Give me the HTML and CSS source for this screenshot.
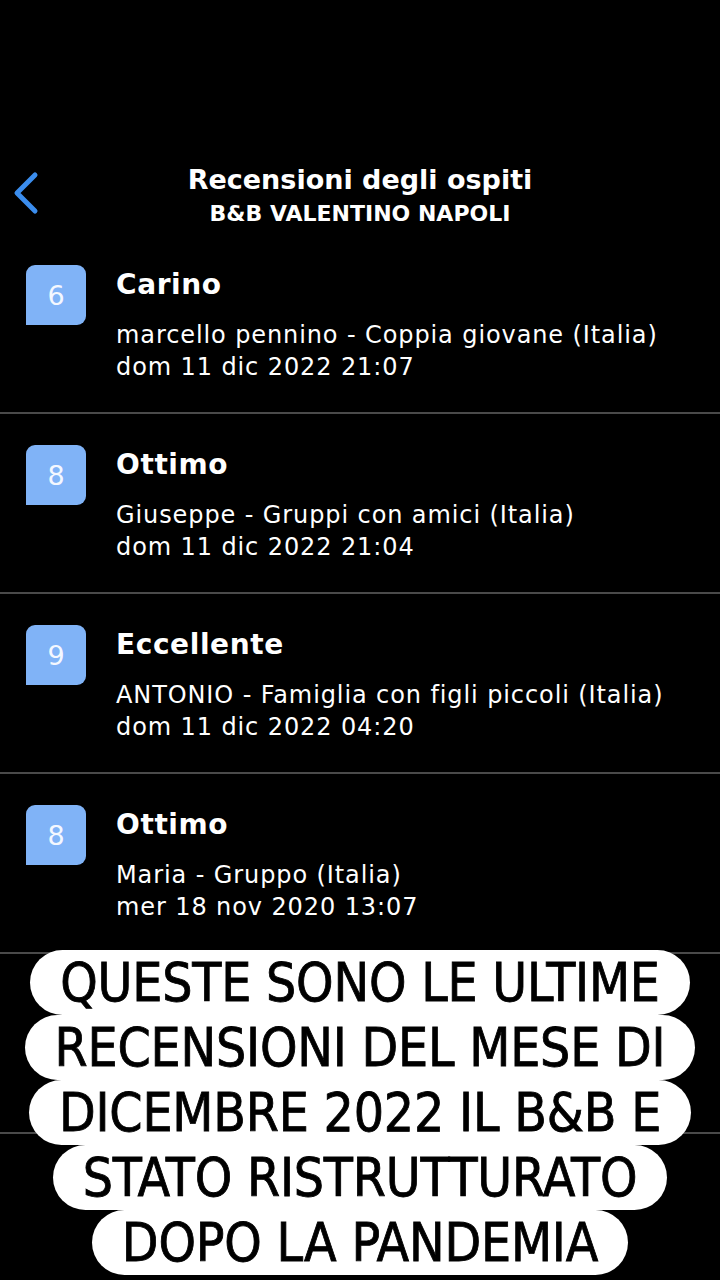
FILE: index.html
```html
<!DOCTYPE html>
<html lang="it">
<head>
    <meta charset="UTF-8">
    <meta name="viewport" content="width=device-width, initial-scale=1.0">
    <title>Recensioni degli ospiti</title>
    <link rel="stylesheet" href="styles.css">
</head>
<body>
    <div class="screen">
        <header class="nav">
            <a class="back" href="#">
                <svg width="30" height="44" viewBox="0 0 30 44">
                    <path d="M24 4 L6 22 L24 40" fill="none" stroke="#3b8ded" stroke-width="5" stroke-linecap="round" stroke-linejoin="round"/>
                </svg>
            </a>
            <div class="nav-title">
                <h1>Recensioni degli ospiti</h1>
                <p>B&amp;B VALENTINO NAPOLI</p>
            </div>
        </header>

        <ul class="reviews">
            <li class="review">
                <div class="score">6</div>
                <div class="review-body">
                    <h2>Carino</h2>
                    <p>marcello pennino - Coppia giovane (Italia)</p>
                    <p>dom 11 dic 2022 21:07</p>
                </div>
            </li>
            <li class="review">
                <div class="score">8</div>
                <div class="review-body">
                    <h2>Ottimo</h2>
                    <p>Giuseppe - Gruppi con amici (Italia)</p>
                    <p>dom 11 dic 2022 21:04</p>
                </div>
            </li>
            <li class="review">
                <div class="score">9</div>
                <div class="review-body">
                    <h2>Eccellente</h2>
                    <p>ANTONIO - Famiglia con figli piccoli (Italia)</p>
                    <p>dom 11 dic 2022 04:20</p>
                </div>
            </li>
            <li class="review">
                <div class="score">8</div>
                <div class="review-body">
                    <h2>Ottimo</h2>
                    <p>Maria - Gruppo (Italia)</p>
                    <p>mer 18 nov 2020 13:07</p>
                </div>
            </li>
            <li class="review"></li>
        </ul>

        <!-- testo della storia sopra la lista -->
        <div class="caption">
            <span>QUESTE SONO LE ULTIME</span>
            <span>RECENSIONI DEL MESE DI</span>
            <span>DICEMBRE 2022 IL B&amp;B E</span>
            <span>STATO RISTRUTTURATO</span>
            <span>DOPO LA PANDEMIA</span>
        </div>
    </div>
</body>
</html>
```

FILE: styles.css
```css
body {
    margin: 0;
    background-color: #000;
    font-family: "DejaVu Sans", sans-serif;
    color: #fff;
}

.screen {
    position: relative;
    width: 720px;
    height: 1280px;
    overflow: hidden;
}

.nav {
    display: flex;
    align-items: flex-start;
    height: 234px;
    padding-top: 160px;
    box-sizing: border-box;
}

.back {
    display: flex;
    margin-left: 11px;
    margin-top: 11px;
}

.nav-title {
    flex: 1;
    text-align: center;
    margin-right: 41px;
}

.nav-title h1 {
    margin: 0;
    font-size: 27px;
    font-weight: 700;
    line-height: 40px;
}

.nav-title p {
    margin: 0;
    font-size: 22px;
    font-weight: 700;
    line-height: 28px;
}

.reviews {
    list-style: none;
    margin: 0;
    padding: 0;
}

.review {
    display: flex;
    height: 180px;
    box-sizing: border-box;
    padding: 31px 0 0 26px;
    border-bottom: 2px solid #4a4a4a;
}

.score {
    width: 60px;
    height: 60px;
    flex: 0 0 auto;
    display: flex;
    align-items: center;
    justify-content: center;
    background-color: #80b3f7;
    border-radius: 9px 9px 9px 0;
    font-size: 27px;
    color: #f4f8ff;
}

.review-body {
    margin-left: 30px;
}

.review-body h2 {
    margin: 0;
    font-size: 28px;
    font-weight: 700;
    line-height: 40px;
    letter-spacing: 0.6px;
}

.review-body p {
    margin: 0;
    font-size: 24px;
    line-height: 32px;
    letter-spacing: 0.9px;
}

.review-body h2 + p {
    margin-top: 14px;
}

.caption {
    position: absolute;
    left: 0;
    right: 0;
    top: 950px;
    display: flex;
    flex-direction: column;
    align-items: center;
    font-family: "DejaVu Sans Condensed", "DejaVu Sans", sans-serif;
    font-stretch: condensed;
    font-size: 53px;
    letter-spacing: -0.2px;
    line-height: 65px;
    color: #000;
    -webkit-text-stroke: 0.8px #000;
}

.caption span {
    background-color: #fff;
    border-radius: 34px;
    padding: 0 30px;
    white-space: nowrap;
}
```
